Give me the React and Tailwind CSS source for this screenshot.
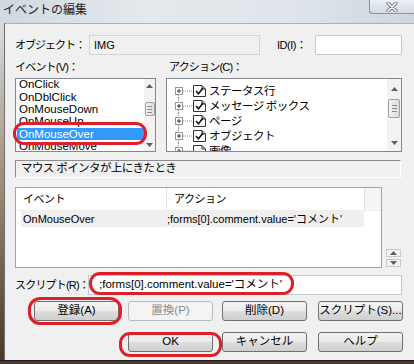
import React from "react";

const events = ["OnClick", "OnDblClick", "OnMouseDown", "OnMouseUp", "OnMouseOver", "OnMouseMove"];
const actions = [
  { label: "ステータス行", checked: true },
  { label: "メッセージ ボックス", checked: true },
  { label: "ページ", checked: true },
  { label: "オブジェクト", checked: true },
  { label: "画像", checked: false },
];

const Arrow = ({ up }) => (
  <svg width="7" height="4" viewBox="0 0 7 4">
    {up ? <path d="M0 4 L3.5 0 L7 4 Z" fill="#5e5e5e" /> : <path d="M0 0 L3.5 4 L7 0 Z" fill="#5e5e5e" />}
  </svg>
);

const Thumb = ({ className }) => (
  <div className={`rounded-[2px] border border-[#a0a0a0] bg-gradient-to-r from-[#f4f4f4] to-[#dcdcdc] flex flex-col items-center justify-center gap-[2px] ${className}`}>
    <div className="w-[5px] h-px bg-[#8a8a8a]" />
    <div className="w-[5px] h-px bg-[#8a8a8a]" />
    <div className="w-[5px] h-px bg-[#8a8a8a]" />
  </div>
);

const TreeMark = ({ checked, first }) => (
  <svg width="40" height="15" viewBox="0 0 40 15" className="shrink-0">
    <line x1="9.5" y1={first ? 4 : 0} x2="9.5" y2="15" stroke="#8c8c8c" strokeDasharray="1 1" />
    <rect x="6.5" y="4.5" width="7" height="7" fill="#fff" stroke="#8e9aa8" />
    <path d="M8 8 H12 M10 6 V10" stroke="#333" />
    <line x1="14" y1="8" x2="23" y2="8" stroke="#8c8c8c" strokeDasharray="1 1" />
    <path d="M24.5 2.5 H33 L36.5 6 V13.5 H24.5 Z" fill="#fff" stroke="#333" />
    <path d="M33 2.5 V6 H36.5" fill="none" stroke="#333" />
    {checked && <path d="M27 8 L29.5 10.8 L34 5" fill="none" stroke="#111" strokeWidth="1.6" />}
  </svg>
);

const Btn = ({ children, disabled, className = "" }) => (
  <div
    className={`w-[85px] h-[20px] rounded-[3px] border flex items-center justify-center whitespace-nowrap text-[11.5px] ${
      disabled
        ? "border-[#b8bcbf] bg-[#f4f4f4] text-[#8a8a8a]"
        : "border-[#707070] bg-[linear-gradient(#f3f3f3,#ebebeb_48%,#dddddd_52%,#cfcfcf)] text-black"
    } ${className}`}
  >
    {children}
  </div>
);

export default function App() {
  return (
    <div className="relative w-[414px] h-[364px] overflow-hidden flex flex-col bg-[#3a2c20] font-['Liberation_Sans','Noto_Sans_CJK_JP',sans-serif] text-[11px] leading-none text-black whitespace-nowrap">
      {/* title bar */}
      <div className="h-[23px] flex items-start justify-between bg-[linear-gradient(90deg,#d0d8e0,#e4e9ed_35%,#dfe5ea_70%,#cdd6df)]">
        <span className="pl-[3px] pt-[3px] text-[12px] font-['Noto_Sans_CJK_JP',sans-serif] text-[#222]">イベントの編集</span>
        <div className="w-[45px] h-[14px] rounded-bl-[4px] border-l border-b border-[#8593a3] bg-gradient-to-b from-[#eef1f4] to-[#d3dae2] flex items-center justify-center">
          <svg width="12" height="10" viewBox="0 0 12 10">
            <path d="M2 1 L10 9 M10 1 L2 9" stroke="#6a7580" strokeWidth="3.2" strokeLinecap="round" />
            <path d="M2 1 L10 9 M10 1 L2 9" stroke="#ffffff" strokeWidth="1.6" strokeLinecap="round" />
          </svg>
        </div>
      </div>

      <div className="flex-1 flex min-h-0">
        <div className="w-[5px] bg-gradient-to-b from-[#d9dcdf] via-[#9a8a74] to-[#4a3828]" />
        <div className="w-px bg-[#6b6b6b]" />
        <div className="flex-1 bg-[#f0f0f0] border-t border-[#a9b1b9] pl-[10px] pr-[11px] flex flex-col">
          {/* object row */}
          <div className="mt-[11px] h-[20px] flex items-center">
            <span className="w-[74px] tracking-[-1px]">オブジェクト：</span>
            <div className="w-[171px] h-[20px] border border-[#d4d4d4] bg-[#f0f0f0] pl-[4px] flex items-center">IMG</div>
            <span className="ml-[17px] w-[38px] tracking-[-0.5px]">ID(I)：</span>
            <div className="w-[87px] h-[20px] rounded-[2px] border border-[#c4c8cc] bg-white" />
          </div>

          {/* list labels */}
          <div className="mt-[6px] h-[13px] flex items-center tracking-[-0.8px]">
            <span className="w-[154px]">イベント(V)：</span>
            <span>アクション(C)：</span>
          </div>

          {/* lists */}
          <div className="mt-[4px] h-[74px] flex gap-[10px]">
            <div className="w-[141px] border border-[#828790] bg-white flex">
              <div className="flex-1 pl-px overflow-hidden">
                {events.map((e) => (
                  <div
                    key={e}
                    className={`h-[12.3px] px-[2px] flex items-center text-[11.5px] ${
                      e === "OnMouseOver" ? "bg-[#3399ff] text-white" : ""
                    }`}
                  >
                    {e}
                  </div>
                ))}
              </div>
              <div className="w-[11px] flex flex-col items-center bg-[#f2f2f2]">
                <div className="h-[13px] flex items-center"><Arrow up /></div>
                <Thumb className="mt-[10px] w-[10px] h-[14px]" />
                <div className="flex-1" />
                <div className="h-[13px] flex items-center"><Arrow /></div>
              </div>
            </div>

            <div className="w-[236px] border border-[#828790] bg-white flex">
              <div className="flex-1 pl-[2px] pt-[4px] overflow-hidden">
                {actions.map((a, i) => (
                  <div key={a.label} className="h-[15px] flex items-center">
                    <TreeMark checked={a.checked} first={i === 0} />
                    <span className="text-[11.5px] tracking-[-0.5px] font-['Noto_Sans_CJK_JP',sans-serif]">{a.label}</span>
                  </div>
                ))}
              </div>
              <div className="w-[14px] flex flex-col items-center bg-[#f2f2f2]">
                <div className="h-[20px] flex items-center"><Arrow up /></div>
                <Thumb className="w-[12px] h-[19px]" />
                <div className="flex-1" />
                <div className="h-[16px] flex items-center"><Arrow /></div>
              </div>
            </div>
          </div>

          {/* description */}
          <div className="mt-[8px] h-[18px] w-[386px] border-t border-l border-[#8c8c8c] border-b border-r border-b-[#ffffff] border-r-[#ffffff] pl-[5px] flex items-center text-[11.5px] tracking-[-0.6px]">
            マウス ポインタが上にきたとき
          </div>

          {/* list view */}
          <div className="mt-[9px] flex items-end">
            <div className="w-[367px] h-[81px] border border-[#a3a3a3] bg-white flex flex-col">
              <div className="h-[23px] flex border-b border-[#eeeeee] tracking-[-0.5px]">
                <div className="w-[151px] pl-[7px] flex items-center border-r border-[#e3e3e3]">イベント</div>
                <div className="w-[198px] pl-[7px] flex items-center border-r border-[#e3e3e3]">アクション</div>
                <div className="flex-1 bg-[#f5f5f5]" />
              </div>
              <div className="ml-[5px] w-[343px] h-[16px] bg-[#efefef] flex items-center">
                <span className="w-[146px] pl-[2px]">OnMouseOver</span>
                <span>;forms[0].comment.value='コメント'</span>
              </div>
            </div>
            <div className="ml-[4px] mb-px w-[15px] flex flex-col gap-[2px]">
              <div className="h-[8px] border border-[#c9c9c9] bg-[#f3f3f3] flex items-center justify-center"><Arrow up /></div>
              <div className="h-[8px] border border-[#c9c9c9] bg-[#f3f3f3] flex items-center justify-center"><Arrow /></div>
            </div>
          </div>

          {/* script row */}
          <div className="mt-[7px] h-[20px] flex items-center">
            <span className="w-[73px] tracking-[-0.8px]">スクリプト(R)：</span>
            <div className="w-[314px] h-[20px] border border-[#c4c8cc] bg-white pl-[10px] flex items-center text-[11.5px]">
              ;forms[0].comment.value='コメント'
            </div>
          </div>

          {/* buttons */}
          <div className="mt-[6px] flex pl-[19px]">
            <Btn>登録(A)</Btn>
            <Btn disabled className="ml-[9px]">置換(P)</Btn>
            <Btn className="ml-[9px]">削除(D)</Btn>
            <Btn className="ml-[11px]">スクリプト(S)...</Btn>
          </div>
          <div className="mt-[11px] flex pl-[113px]">
            <Btn>OK</Btn>
            <Btn className="ml-[9px]">キャンセル</Btn>
            <Btn className="ml-[11px]">ヘルプ</Btn>
          </div>
        </div>
      </div>
      <div className="h-[4px] border-t border-[#1e1e1e] bg-[#4a3a2c]" />

      {/* red annotation marks */}
      <div className="absolute left-[13px] top-[122px] w-[134px] h-[23px] rounded-[11px] border-[3px] border-[#dd1f2a]" />
      <div className="absolute left-[89px] top-[272px] w-[205px] h-[23px] rounded-[11px] border-[3px] border-[#dd1f2a]" />
      <div className="absolute left-[28px] top-[297px] w-[94px] h-[28px] rounded-[12px] border-[3px] border-[#dd1f2a]" />
      <div className="absolute left-[119px] top-[332px] w-[103px] h-[25px] rounded-[11px] border-[3px] border-[#dd1f2a]" />
    </div>
  );
}
